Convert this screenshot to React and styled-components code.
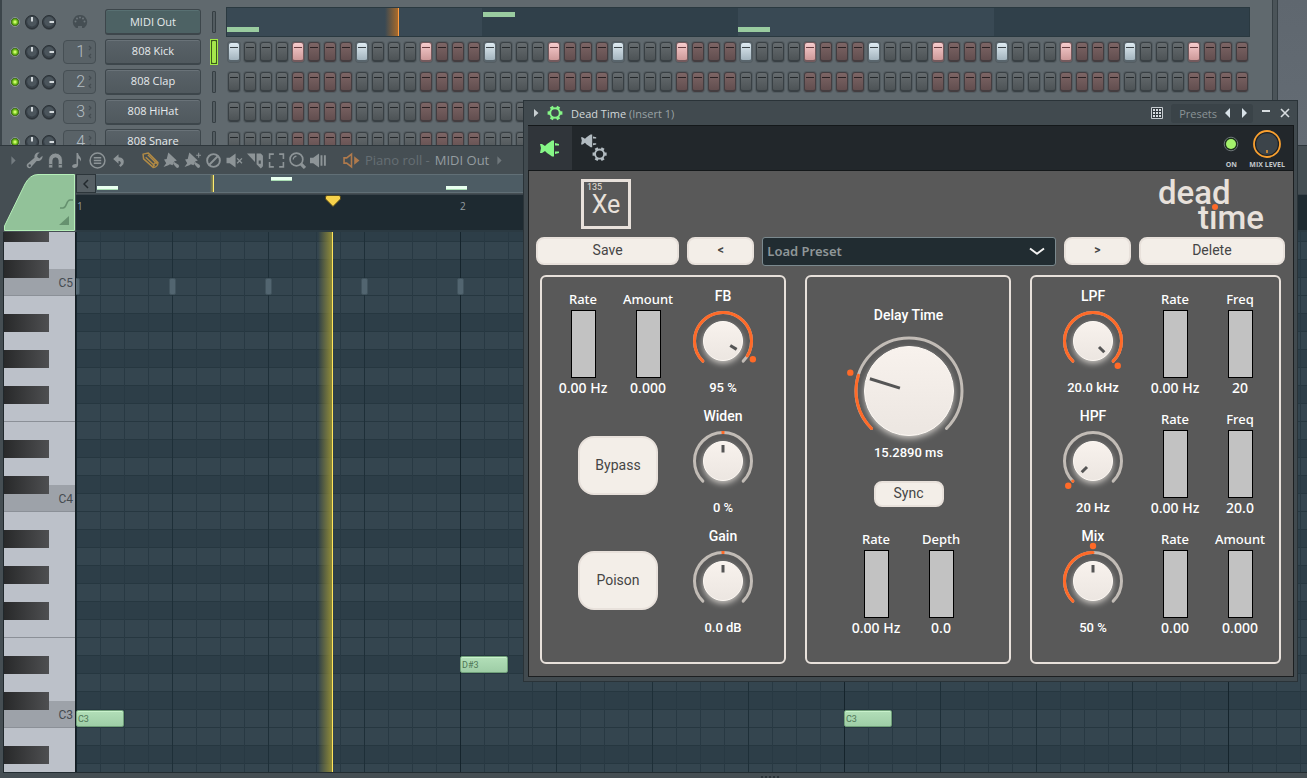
import React from "react";
import styled, { createGlobalStyle, css } from "styled-components";

const GlobalStyle = createGlobalStyle`
  *, *::before, *::after { box-sizing: border-box; }
  body { margin: 0; background: #454e53; }
  button, input, select { font: inherit; margin: 0; }
  button { padding: 0; border: 0; background: none; color: inherit; cursor: pointer; }
`;

const ui = '"Open Sans", "Noto Sans", sans-serif';
const grotesk = 'Roboto, "Liberation Sans", sans-serif';
const ORANGE = "#ff6a28";

const Desktop = styled.main`
  position: relative;
  display: flex;
  flex-direction: column;
  height: 100vh;
  overflow: hidden;
  font-family: ${ui};
`;

/* ---------- Channel rack ---------- */

const TopArea = styled.section`
  display: flex;
  height: 145px;
  flex: none;
  overflow: hidden;
`;

const Rack = styled.div`
  flex: 1;
  min-width: 0;
  padding: 7px 22px 0 8px;
  border-left: 2px solid #3c454a;
  background: #60696e;
`;

const Splitter = styled.div`
  width: 6px;
  background: #4b5459;
  border: solid #363f44;
  border-width: 0 1px;
`;

const SidePanel = styled.div`
  width: 29px;
  background: linear-gradient(#5f676f, #646c74);
`;

const Channel = styled.div`
  display: flex;
  align-items: center;
  height: 30px;
`;

const Led = styled.button`
  width: 10px;
  height: 10px;
  border-radius: 50%;
  border: 1px solid #8b9599;
  background: radial-gradient(circle, #d6ff72 10%, #74c41f 40%, #24450d 75%);
`;

const KnobPair = styled.div`
  display: flex;
  gap: 3px;
  margin: 0 7px 0 5px;
`;

const MixerSlot = styled.button`
  display: flex;
  align-items: center;
  justify-content: flex-end;
  gap: 3px;
  width: 33px;
  height: 24px;
  padding-right: 3px;
  border: 1px solid #464f54;
  border-radius: 4px;
  background: #596267;
  color: #b3bdc2;
  font: 300 16px/22px ${grotesk};
`;

const PortSlot = styled.div`
  display: flex;
  justify-content: center;
  width: 33px;
`;

const ChannelName = styled.button`
  width: 96px;
  height: 26px;
  margin: 0 9px;
  padding-bottom: ${(p) => (p.$midi ? 0 : 2)}px;
  border: 1px solid #3d464b;
  border-bottom-width: 2px;
  border-radius: 3px;
  background: ${(p) => (p.$midi ? "#4d6264" : "linear-gradient(#596268, #50595e)")};
  box-shadow: inset 0 1px 0 ${(p) => (p.$midi ? "#587072" : "#697278")};
  color: #e6eaec;
  font-size: 11px;
  font-weight: 500;
  line-height: 20px;
`;

const Selector = styled.button`
  width: 8px;
  height: 26px;
  margin-right: 8px;
  border: 1px solid transparent;
  padding: 1px;
  ${(p) => p.$on && css`border: 1px solid #a2ea44; background: #3b5a1c;`}
  &::before {
    content: "";
    display: block;
    height: 100%;
    border-radius: 1px;
    border: ${(p) => (p.$on ? "0" : "1px solid #363f44")};
    background: ${(p) => (p.$on ? "#a6e84c" : "#535c61")};
  }
`;

const Steps = styled.div`
  flex: 1;
  display: grid;
  grid-template-columns: repeat(64, 1fr);
  justify-items: center;
`;

const stepTone = {
  grey: ["#666c6f", "#4d5356", "#394044", "#24292c"],
  red: ["#7d6565", "#624e4f", "#443d40", "#2b2022"],
  greyOn: ["#dfebf2", "#a3b4be", "#59656c", "#3d464b"],
  redOn: ["#f7cccd", "#cd9999", "#74595c", "#6b3f42"],
};

const Step = styled.input`
  appearance: none;
  width: 12px;
  height: 20px;
  border: 1px solid ${(p) => stepTone[p.$tone][2]};
  border-bottom-width: 2px;
  border-radius: 3px;
  box-shadow: 0 0 0 1px #545d62;
  background:
    linear-gradient(${(p) => stepTone[p.$tone][3]}, ${(p) => stepTone[p.$tone][3]}) center 4px / 8px 1px no-repeat,
    linear-gradient(${(p) => stepTone[p.$tone][0]}, ${(p) => stepTone[p.$tone][1]});
`;

const ClipLane = styled.div`
  position: relative;
  flex: 1;
  height: 30px;
  border: 1px solid #2a3940;
  background: linear-gradient(90deg, #394954 25%, #30404a 25% 50%, #394954 50% 75%, #30404a 75%);
`;

const LaneNote = styled.i`
  position: absolute;
  width: 32px;
  height: 5px;
  background: #9acca0;
`;

const LanePlayhead = styled.i`
  position: absolute;
  top: 0;
  bottom: 0;
  width: 14px;
  border-right: 1px solid #ff9c40;
  background: linear-gradient(90deg, transparent, #a86a2a);
`;

/* ---------- Piano roll ---------- */

const PianoRoll = styled.section`
  flex: 1;
  min-height: 0;
  display: flex;
  flex-direction: column;
  padding: 0 0 0 3px;
  border-top: 1px solid #2e373c;
  background: #454e53;
`;

const Toolbar = styled.div`
  display: flex;
  align-items: center;
  height: 28px;
  flex: none;
  color: #8d9497;
`;

const ToolButton = styled.button`
  display: flex;
  align-items: center;
  justify-content: center;
  width: 21px;
  height: 24px;
  color: ${(p) => p.$color || "inherit"};
  svg { display: block; }
`;

const ToolGap = styled.span`
  width: ${(p) => p.$w}px;
`;

const RollTitle = styled.h2`
  display: flex;
  align-items: center;
  gap: 5px;
  margin: 0;
  font-size: 13px;
  font-weight: 400;
  color: #656e73;
  b { font-weight: 400; color: #949ca0; }
`;

const RollHead = styled.div`
  display: flex;
  height: 58px;
  flex: none;
`;

const KeyTab = styled.div`
  width: 73px;
  flex: none;
  svg { display: block; }
`;

const HeadLanes = styled.div`
  flex: 1;
  min-width: 0;
`;

const Overview = styled.div`
  display: flex;
  height: 21px;
  border-bottom: 1px solid #39434a;
`;

const ScrollButton = styled.button`
  display: flex;
  align-items: center;
  justify-content: center;
  width: 20px;
  height: 19px;
  border: 1px solid #2c353a;
  background: #565f64;
`;

const OverviewTrack = styled.div`
  position: relative;
  flex: 1;
  height: 19px;
  margin-right: 10px;
  border: solid #616f76;
  border-width: 1px 0;
  background: #4d5c64;
`;

const OverviewNote = styled.i`
  position: absolute;
  width: 21px;
  height: 4px;
  background: #e9fff0;
  border-bottom: 1px solid #a8dcb2;
`;

const OverviewPlayhead = styled.i`
  position: absolute;
  top: 0;
  bottom: 0;
  width: 4px;
  border-right: 1px solid #ffec72;
  background: linear-gradient(90deg, transparent, #8f8b45);
`;

const Timeline = styled.div`
  position: relative;
  height: 37px;
  border-bottom: 2px solid #2b3a42;
  background: #1e2a31;
  color: #949da2;
  font-size: 10px;
  line-height: 12px;
`;

const BarNumber = styled.span`
  position: absolute;
  top: 5px;
`;

const TimeMarker = styled.svg`
  position: absolute;
  top: 0;
  width: 16px;
  height: 13px;
`;

const Editor = styled.div`
  flex: 1;
  min-height: 0;
  display: flex;
  overflow: hidden;
  border-bottom: 1px solid #222c31;
`;

const Keyboard = styled.div`
  width: 72px;
  flex: none;
  overflow: hidden;
  border-left: 1px solid #20282c;
  background: #bcc1c9;
`;

const Key = styled.div`
  display: flex;
  justify-content: flex-end;
  align-items: flex-start;
  height: ${(p) => (p.$first ? 10 : 18)}px;
  padding-right: 2px;
  font: 400 12px/11px ${grotesk};
  color: #454b51;
  background: ${(p) =>
    p.$note === "C" ? "#9da2a9"
      : p.$note === "C#" ? "linear-gradient(transparent 50%, #9da2a9 50%)"
        : "transparent"};
  border-bottom: ${(p) => (p.$note === "C" || p.$note === "F" ? "1px solid #8b9097" : "0")};
  &::before {
    content: "";
    align-self: stretch;
    width: 45px;
    margin-right: auto;
    background: ${(p) => (p.$note.includes("#") ? "linear-gradient(90deg, #28292a, #4e4f51)" : "transparent")};
  }
`;

const NoteGrid = styled.div`
  position: relative;
  flex: 1;
  min-width: 0;
  overflow: hidden;
  border-left: 1px solid #141d22;
`;

const GridRow = styled.div`
  height: ${(p) => (p.$first ? 10 : 18)}px;
  border-bottom: 1px solid #263740;
  background: ${(p) => (p.$dark ? "#2d3e48" : "#34454f")};
`;

const GridLines = styled.div`
  position: absolute;
  inset: 0;
  background:
    repeating-linear-gradient(90deg, #15242c 0 1px, transparent 1px 384px),
    repeating-linear-gradient(90deg, #1e2f38 0 1px, transparent 1px 96px),
    repeating-linear-gradient(90deg, #283943 0 1px, transparent 1px 24px);
`;

const Note = styled.button`
  position: absolute;
  width: 48px;
  height: 17px;
  padding-left: 1px;
  border: 1px solid #6f9f79;
  border-radius: 2px;
  background: linear-gradient(#b2dfb8, #9ecda6);
  box-shadow: inset 0 1px 0 #c9f2cc;
  color: #4f7656;
  font: 400 9px/14px ${grotesk};
  text-align: left;
`;

const GhostNote = styled.i`
  position: absolute;
  width: 7px;
  height: 17px;
  border: 1px solid #41535d;
  border-radius: 2px;
  background: #526570;
`;

const Playhead = styled.i`
  position: absolute;
  top: 0;
  bottom: 0;
  width: 15px;
  border-right: 1px solid #ffe45c;
  background: linear-gradient(90deg, transparent, #8f8a38);
`;

const BottomGrip = styled.div`
  display: flex;
  justify-content: center;
  align-items: flex-end;
  height: 5px;
  flex: none;
  padding-left: 230px;
  &::after {
    content: "";
    width: 18px;
    height: 2px;
    background: repeating-linear-gradient(90deg, #2a3338 0 2px, transparent 2px 4px);
  }
`;

/* ---------- Plugin window ---------- */

const PluginWindow = styled.section`
  position: absolute;
  top: 100px;
  left: 523px;
  right: 9px;
  padding: 0 3px 4px 4px;
  border: 1px solid #2a3338;
  background: #414a4f;
`;

const TitleBar = styled.header`
  display: flex;
  align-items: center;
  height: 24px;
  padding: 0 0 0 2px;
  color: #cfd4d6;
`;

const TitleText = styled.h1`
  flex: 1;
  margin: 0 0 0 3px;
  font-size: 11px;
  font-weight: 500;
  color: #d3d8da;
  span { font-weight: 400; color: #9aa2a5; }
`;

const IconButton = styled.button`
  display: flex;
  align-items: center;
  justify-content: center;
  width: ${(p) => p.$w}px;
  height: 19px;
`;

const PresetGroup = styled.div`
  display: flex;
  align-items: center;
  height: 19px;
  margin: 0 3px 0 4px;
  padding: 0 2px 0 8px;
  border-radius: 3px;
  background: #3a4348;
  color: #8b9396;
  font-size: 11px;
  button { color: #d8e2e8; }
`;

const WrapperBar = styled.div`
  display: flex;
  height: 46px;
  border: solid #14181a;
  border-width: 1px 1px 1px 0;
  background: #22272b;
`;

const WrapperTab = styled.button`
  display: flex;
  align-items: center;
  justify-content: center;
  width: 44px;
  background: ${(p) => (p.$active ? "#30353a" : "transparent")};
`;

const WrapperControls = styled.div`
  display: flex;
  gap: 3px;
  margin-left: auto;
  padding-right: 8px;
`;

const WrapperControl = styled.label`
  display: flex;
  flex-direction: column;
  align-items: center;
  color: #c3c8cb;
  font-size: 7px;
  font-weight: 700;
  line-height: 8px;
  input { position: absolute; opacity: 0; width: 28px; height: 28px; }
  svg { display: block; margin: 4px 0 3px; }
`;

const Face = styled.div`
  padding: 8px 8px 12px 7px;
  border: solid #1c1f21;
  border-width: 0 1px 1px;
  background: #595959;
  color: #fff;
  font-family: ${grotesk};
`;

const Brand = styled.div`
  display: flex;
  justify-content: space-between;
  height: 58px;
  padding: 0 18px 0 45px;
`;

const Element = styled.div`
  width: 50px;
  height: 50px;
  border: 3px solid #e8e1db;
  color: #e8e1db;
  text-align: center;
  font-size: 25px;
  line-height: 24px;
  small {
    display: block;
    padding-left: 3px;
    text-align: left;
    font-size: 9px;
    line-height: 11px;
  }
`;

const Wordmark = styled.svg`
  display: block;
  width: 110px;
  height: 57px;
  overflow: visible;
  font: 500 33px ${grotesk};
  fill: #e8e1db;
`;

const PresetRow = styled.div`
  display: grid;
  grid-template-columns: 143fr 67fr 293fr 67fr 146fr;
  gap: 8px;
`;

const CreamButton = styled.button`
  height: ${(p) => p.$h || 28}px;
  width: ${(p) => (p.$w ? p.$w + "px" : "auto")};
  padding-bottom: 2px;
  border: 2px solid #e8e1db;
  border-radius: ${(p) => p.$r || 8}px;
  background: #f3eee8;
  color: #454545;
  font-size: ${(p) => (p.$small ? 12 : 14)}px;
  font-weight: ${(p) => (p.$small ? 700 : 400)};
  line-height: 20px;
`;

const SelectWrap = styled.div`
  position: relative;
  svg { position: absolute; right: 11px; top: 10px; pointer-events: none; }
`;

const PresetSelect = styled.select`
  appearance: none;
  display: block;
  width: 100%;
  height: 29px;
  padding: 0 4px 2px;
  border: 1px solid #7b898e;
  border-radius: 3px;
  background: #212c31;
  color: #8f9698;
  font: 600 13px/20px "Noto Sans", ${ui};
`;

const Panels = styled.div`
  display: grid;
  grid-template-columns: 246fr 206fr 251fr;
  gap: 19px;
  padding: 9px 4px 0;
`;

const Panel = styled.section`
  min-height: 389px;
  border: 2px solid #e8e1db;
  border-radius: 6px;
`;

const FeedbackPanel = styled(Panel)`
  display: grid;
  grid-template-columns: 65px 65px 85px;
  grid-template-rows: repeat(3, 120px);
  justify-content: center;
  padding: 7px 10px 0 0;
`;

const FilterPanel = styled(Panel)`
  display: grid;
  grid-template-columns: 99px 65px 65px;
  grid-template-rows: repeat(3, 120px);
  justify-content: center;
  padding: 7px 0 0 5px;
`;

const DelayPanel = styled(Panel)`
  display: flex;
  flex-direction: column;
  align-items: center;
  padding: 26px 0 0 1px;
`;

const PadStack = styled.div`
  grid-column: 1 / 3;
  grid-row: 2 / 4;
  display: flex;
  flex-direction: column;
  align-items: center;
  gap: 56px;
  padding: 32px 0 0 5px;
`;

const KnobCell = styled.label`
  position: relative;
  display: flex;
  flex-direction: column;
  align-items: center;
  font-size: 14px;
  font-weight: 500;
  line-height: 24px;
  white-space: nowrap;
  svg { display: block; overflow: visible; margin-bottom: ${(p) => (p.$big ? 0 : 2)}px; }
  input { position: absolute; top: 30px; width: 60px; height: 60px; margin: 0; opacity: 0; }
  output { font-size: 13px; }
`;

const SyncWrap = styled.div`
  margin: 16px 0 21px;
`;

const SliderPair = styled.div`
  display: grid;
  grid-template-columns: 65px 65px;
`;

const SliderCell = styled.label`
  display: flex;
  flex-direction: column;
  align-items: center;
  padding-top: ${(p) => (p.$flush ? 0 : 4)}px;
  font: 500 13px/22px "Noto Sans", ${ui};
  white-space: nowrap;
  output { font-size: 14px; line-height: 20px; }
`;

const SliderInput = styled.input`
  appearance: none;
  writing-mode: vertical-lr;
  direction: rtl;
  width: 25px;
  height: 68px;
  border: 1px solid #000;
  background: #c2c2c2;
  &::-webkit-slider-thumb { appearance: none; width: 25px; height: 1px; background: transparent; }
`;

/* ---------- Drawings ---------- */

function MiniKnob({ right }) {
  return (
    <svg width="14" height="15" viewBox="0 0 14 15">
      <circle cx="7" cy="8.2" r="6.6" fill="#394146" />
      <circle cx="7" cy="7" r="6.5" fill="#3a434a" stroke="#2a3136" />
      <circle cx="7" cy="6.6" r="4.8" fill="#4b555c" />
      {right ? <rect x="7.5" y="6" width="4.5" height="2" fill="#d3d9dc" /> : <rect x="6" y="2" width="2" height="4.5" fill="#d3d9dc" />}
    </svg>
  );
}

function MidiPort() {
  return (
    <svg width="16" height="16" viewBox="0 0 16 16">
      <path d="M8 1a7 7 0 0 1 5 12l-1 1h-2v-2H6v2H4l-1-1A7 7 0 0 1 8 1z" fill="#454e53" />
      {[[3.5, 7.5], [5, 4.6], [8, 3.4], [11, 4.6], [12.5, 7.5]].map(([x, y]) => (
        <circle key={x} cx={x} cy={y} r="1" fill="#6b7479" />
      ))}
    </svg>
  );
}

function Spin() {
  return (
    <svg width="4" height="16" viewBox="0 0 4 16" fill="none" stroke="#444c51" strokeWidth="1.2">
      <path d="M1 2l2 2-2 2M3 10l-2 2 2 2" />
    </svg>
  );
}

function polar(c, r, deg) {
  const a = (deg * Math.PI) / 180;
  return [c[0] + r * Math.sin(a), c[1] - r * Math.cos(a)];
}

function arc(c, r, from, to) {
  const [x1, y1] = polar(c, r, from);
  const [x2, y2] = polar(c, r, to);
  return `M${x1} ${y1}A${r} ${r} 0 ${to - from > 180 ? 1 : 0} 1 ${x2} ${y2}`;
}

function Dial({ value, big, bipolar }) {
  const c = big ? [64, 64] : [33, 33];
  const ring = big ? 53 : 28.5;
  const body = big ? 44.5 : 19.5;
  const angle = value * 270 - 135;
  const tick = big ? [9.5, 41] : [8.5, 16];
  const t1 = polar(c, tick[0], angle);
  const t2 = polar(c, tick[1], angle);
  const dot = polar(c, big ? 61.5 : 35, angle);
  const id = big ? "dial-big" : "dial-small";
  return (
    <svg width={big ? 128 : 66} height={big ? 114 : 66} viewBox={big ? "0 0 128 114" : "0 0 66 66"} aria-hidden="true">
      <defs>
        <linearGradient id={id} x2="0" y2="1">
          <stop offset="0" stopColor="#f8f2ed" />
          <stop offset="1" stopColor="#ece6e1" />
        </linearGradient>
        <filter id={id + "-glow"} x="-40%" y="-40%" width="180%" height="180%">
          <feGaussianBlur stdDeviation="3" />
        </filter>
      </defs>
      <circle cx={c[0]} cy={c[1] + 3} r={body} fill="#f3eee8" opacity="0.75" filter={`url(#${id}-glow)`} />
      <g fill="none" strokeWidth="3" strokeLinecap="round">
        <path d={arc(c, ring, -135, 135)} stroke="#c2bcb6" />
        {bipolar
          ? <path d={arc(c, ring, -3, 3)} stroke={ORANGE} strokeLinecap="butt" />
          : <path d={arc(c, ring, -135, Math.max(angle, -134.5))} stroke={ORANGE} />}
      </g>
      <circle cx={c[0]} cy={c[1]} r={body} fill={`url(#${id})`} stroke="#fffaf5" />
      <line x1={t1[0]} y1={t1[1]} x2={t2[0]} y2={t2[1]} stroke="#555" strokeWidth="3" />
      {!bipolar && <circle cx={dot[0]} cy={dot[1]} r="3.2" fill={ORANGE} />}
    </svg>
  );
}

function Knob({ label, text, value, big, bipolar }) {
  return (
    <KnobCell $big={big}>
      <span>{label}</span>
      <Dial value={value} big={big} bipolar={bipolar} />
      <input type="range" min="0" max="1" step="0.001" defaultValue={value} />
      <output>{text}</output>
    </KnobCell>
  );
}

function Slider({ label, text, flush }) {
  return (
    <SliderCell $flush={flush}>
      <span>{label}</span>
      <SliderInput type="range" min="0" max="1" step="0.001" defaultValue="0" />
      <output>{text}</output>
    </SliderCell>
  );
}

function GearShape({ color }) {
  return (
    <g fill="none" stroke={color}>
      <circle cx="8" cy="8" r="4.8" strokeWidth="2" />
      {[30, 90, 150, 210, 270, 330].map((a) => (
        <path key={a} d="M8 3V.6" strokeWidth="3.4" transform={`rotate(${a} 8 8)`} />
      ))}
    </g>
  );
}

const plugPath = "M0 4h2l3 2 2-2 3-2 2-1.500h2v16h-2L10 15l-3-2-2-2-3 2H0l1-5zM15 3l4 1v1.500h-4zM15 11.500h4V13l-4 1z";

function Plug() {
  return (
    <svg width="20" height="17" viewBox="0 0 20 17"><path d={plugPath} fill="#86f787" /></svg>
  );
}

function PlugGear() {
  return (
    <svg width="27" height="28" viewBox="0 0 27 28">
      <path d={plugPath} fill="#b3bcc2" transform="scale(.8)" />
      <g transform="translate(11 12.500) scale(.95)"><GearShape color="#b3bcc2" /></g>
    </svg>
  );
}

const brush = (
  <>
    <path d="M5 .5L13 8l-2.500 1L9 12.500 6.500 11.500 5 12.500.5 14 3 10.500 1 7 3.500 6.500z" />
    <path d="M10.500 9.500l4 2.500a1.600 1.600 0 1 1-2 2.500L9.500 11z" />
  </>
);

const icons = {
  play: <path d="M6 4l4 4-4 4z" />,
  wrench: <path d="M15.500 3.500l-3 2.500-2-1.500L11 2l2-1.500C10 0 7.500 2 8 5.500L2.500 10C.5 11 0 13 1.500 14.500S5 15 5.500 13.500L10 8.500c3.500.5 6-2 5.500-5zM3.500 14a1.200 1.200 0 1 1 0-2.400 1.200 1.200 0 0 1 0 2.400z" />,
  magnet: <path d="M1.500 15V7.500a6.500 6.500 0 0 1 13 0V15h-4V8a2.500 2.500 0 0 0-5 0v7zM2 11.800h3M11 11.800h3" stroke="#454e53" strokeWidth=".8" />,
  note: <path d="M8 1h1.500c0 3 4 4 2.500 8-.5-2-1.500-2.500-2.500-2.800V12c0 2-2 3-3.500 3S3.500 14 4 13s2-2 4-1.500z" />,
  menu: <g fill="none" stroke="currentColor" strokeWidth="1.400"><circle cx="8" cy="8" r="7" /><path d="M4.500 5.500h7M4.500 8h7M4.500 10.500h7" /></g>,
  undo: <path d="M3 6.500L8 2v3c4 0 6 3 4.500 6.500L10 14l-1.500-1.500C11 11 10.500 8.500 8 8.500V11z" />,
  pencil: <g fill="none" stroke="currentColor" strokeWidth="1.400" strokeLinejoin="round"><path d="M1 2l5-1 9 9c0 2.500-2 4.500-4.500 4.500L1.500 6.500z" /><path d="M3.500 5L12 13M5.500 2.500L14 11M11 14a3 3 0 0 1 3.500-4" /></g>,
  brush,
  brushPlus: <>{brush}<path d="M11.500 3h4.500M13.800.8v4.500" stroke="currentColor" /></>,
  ban: <g fill="none" stroke="currentColor" strokeWidth="1.800"><circle cx="8" cy="8" r="6" /><path d="M4 12l8-8" /></g>,
  mute: <><path d="M.5 5.500h3L9 1.500v13l-5.500-4h-3z" /><path d="M10.500 6l4.500 4.500M15 6l-4.500 4.500" stroke="currentColor" strokeWidth="1.300" /></>,
  slice: <><path d="M0 1.500h7.500v8z" /><path fillRule="evenodd" d="M9 1.500h4l2 2v10l-2 2-4-4zM11 8v3h2V8z" /></>,
  select: <path d="M1.500 6.500V2H5.500M10.500 2h4v4.500M14.500 9.500V14h-4M5.500 14h-4V9.500" fill="none" stroke="currentColor" strokeWidth="1.500" />,
  zoom: <g fill="none" stroke="currentColor"><circle cx="7" cy="7" r="6" strokeWidth="1.600" /><path d="M11 11l4 4" strokeWidth="3" /><path d="M4 7a3 3 0 0 1 3-3" strokeWidth="1.200" /></g>,
  playback: <><path d="M0 5.500h3L8.500 1.500v13L3 10.500H0z" /><path d="M10.800 3v10M14 3v10" stroke="currentColor" strokeWidth="1.800" /></>,
  speaker: <><path d="M1 5.500h2.500L8 2v12l-4.500-3.500H1z" fill="none" stroke="currentColor" strokeWidth="1.500" /><path d="M10.500 4l5 4-5 4z" /></>,
};

function Tool({ name, color }) {
  return (
    <ToolButton type="button" aria-label={name} $color={color}>
      <svg width="17" height="17" viewBox="0 0 16 16" fill="currentColor">{icons[name]}</svg>
    </ToolButton>
  );
}

/* ---------- Data ---------- */

const channels = ["808 Kick", "808 Clap", "808 HiHat", "808 Snare"];
const names = ["C", "C#", "D", "D#", "E", "F", "F#", "G", "G#", "A", "A#", "B"];
const rows = Array.from({ length: 64 }, (_, i) => {
  const semitone = 63 - i;
  return { note: names[semitone % 12], octave: Math.floor(semitone / 12) };
});
const rowTop = (i) => (i === 0 ? 0 : 10 + (i - 1) * 18);
const notes = [
  { name: "C3", beat: 0, row: 27 },
  { name: "D#3", beat: 4, row: 24 },
  { name: "C3", beat: 8, row: 27 },
];

function StepRow({ channel, active }) {
  return (
    <Steps>
      {Array.from({ length: 64 }, (_, i) => {
        const red = Math.floor(i / 4) % 2 === 1;
        const on = active && i % 4 === 0;
        return (
          <Step
            key={i}
            type="checkbox"
            aria-label={`${channel} step ${i + 1}`}
            defaultChecked={on}
            $tone={(red ? "red" : "grey") + (on ? "On" : "")}
          />
        );
      })}
    </Steps>
  );
}

function ChannelRack() {
  return (
    <TopArea>
      <Rack>
        <Channel>
          <Led type="button" aria-label="MIDI Out on" />
          <KnobPair><MiniKnob /><MiniKnob right /></KnobPair>
          <PortSlot><MidiPort /></PortSlot>
          <ChannelName type="button" $midi>MIDI Out</ChannelName>
          <Selector type="button" aria-label="Select MIDI Out" />
          <ClipLane>
            <LaneNote style={{ left: 0, top: 19 }} />
            <LaneNote style={{ left: "25%", top: 4 }} />
            <LaneNote style={{ left: "50%", top: 19 }} />
            <LanePlayhead style={{ left: 158 }} />
          </ClipLane>
        </Channel>
        {channels.map((name, i) => (
          <Channel key={name}>
            <Led type="button" aria-label={`${name} on`} />
            <KnobPair><MiniKnob /><MiniKnob right /></KnobPair>
            <MixerSlot type="button">{i + 1}<Spin /></MixerSlot>
            <ChannelName type="button">{name}</ChannelName>
            <Selector type="button" aria-label={`Select ${name}`} $on={i === 0} />
            <StepRow channel={name} active={i === 0} />
          </Channel>
        ))}
      </Rack>
      <Splitter />
      <SidePanel />
    </TopArea>
  );
}

function Roll() {
  return (
    <PianoRoll>
      <Toolbar>
        <Tool name="play" color="#747c80" />
        <Tool name="wrench" />
        <Tool name="magnet" />
        <Tool name="note" />
        <Tool name="menu" />
        <Tool name="undo" />
        <ToolGap $w={11} />
        <Tool name="pencil" color="#b18a45" />
        <Tool name="brush" />
        <Tool name="brushPlus" />
        <Tool name="ban" />
        <Tool name="mute" />
        <Tool name="slice" />
        <Tool name="select" />
        <Tool name="zoom" />
        <Tool name="playback" />
        <ToolGap $w={12} />
        <Tool name="speaker" color="#b07a4c" />
        <ToolGap $w={3} />
        <RollTitle>Piano roll - <b>MIDI Out</b></RollTitle>
        <Tool name="play" color="#6f777b" />
      </Toolbar>
      <RollHead>
        <KeyTab>
          <svg width="73" height="58" viewBox="0 0 73 58">
            <path d="M1.500 56.500V52L22 10Q27 .500 35 .500H71.500V56.500z" fill="#92c299" stroke="#b6efb9" />
            <path d="M58 34h3c4 0 3-8 7-8h3" transform="translate(-1 0)" fill="none" stroke="#66916f" strokeWidth="1.600" />
            <path d="M56 51L66 42v9z" fill="#66916f" />
          </svg>
        </KeyTab>
        <HeadLanes>
          <Overview>
            <ScrollButton type="button" aria-label="Scroll left">
              <svg width="6" height="10" viewBox="0 0 6 10" fill="none" stroke="#22292d" strokeWidth="1.500"><path d="M5 1L1 5l4 4" /></svg>
            </ScrollButton>
            <OverviewTrack>
              <OverviewNote style={{ left: 1, top: 11 }} />
              <OverviewNote style={{ left: 175, top: 2 }} />
              <OverviewNote style={{ left: 350, top: 11 }} />
              <OverviewPlayhead style={{ left: 114 }} />
            </OverviewTrack>
          </Overview>
          <Timeline>
            <BarNumber style={{ left: 1 }}>1</BarNumber>
            <BarNumber style={{ left: 384 }}>2</BarNumber>
            <TimeMarker viewBox="0 0 16 13" style={{ left: 249 }}>
              <path d="M.5 1.500L2 .500h12l1.500 1V4L8 11.500.500 4z" fill="#f7d24b" stroke="#5a4c18" />
            </TimeMarker>
          </Timeline>
        </HeadLanes>
      </RollHead>
      <Editor>
        <Keyboard>
          {rows.map((r, i) => (
            <Key key={i} $note={r.note} $first={i === 0}>{r.note === "C" ? `C${r.octave}` : null}</Key>
          ))}
        </Keyboard>
        <NoteGrid>
          {rows.map((r, i) => (
            <GridRow key={i} $first={i === 0} $dark={r.note.includes("#")} />
          ))}
          <GridLines />
          {[0, 1, 2, 3, 4].map((b) => (
            <GhostNote key={b} style={{ left: b * 96 - 3, top: rowTop(3) }} />
          ))}
          {notes.map((n) => (
            <Note key={n.beat} type="button" style={{ left: n.beat * 96, top: rowTop(n.row) }}>{n.name}</Note>
          ))}
          <Playhead style={{ left: 242 }} />
        </NoteGrid>
      </Editor>
      <BottomGrip />
    </PianoRoll>
  );
}

function DeadTime() {
  return (
    <PluginWindow>
      <TitleBar>
        <IconButton type="button" aria-label="Plugin menu" $w={12}>
          <svg width="5" height="8" viewBox="0 0 5 8"><path d="M0 0l4.500 4L0 8z" fill="#c9d0d3" /></svg>
        </IconButton>
        <IconButton type="button" aria-label="Settings" $w={26}>
          <svg width="16" height="16" viewBox="0 0 16 16"><GearShape color="#86f787" /></svg>
        </IconButton>
        <TitleText>Dead Time <span>(Insert 1)</span></TitleText>
        <IconButton type="button" aria-label="Preset browser" $w={20}>
          <svg width="12" height="12" viewBox="0 0 12 12">
            <path d="M.5.500h11v11H.5z" fill="#323a3f" stroke="#c6ccd0" />
            <path d="M2 3h8M2 6h8M2 9h8" stroke="#d6dce0" strokeWidth="2" strokeDasharray="2 1" />
          </svg>
        </IconButton>
        <PresetGroup>
          Presets
          <IconButton type="button" aria-label="Previous preset" $w={20}>
            <svg width="5" height="10" viewBox="0 0 5 10"><path d="M5 0v10L0 5z" fill="currentColor" /></svg>
          </IconButton>
          <IconButton type="button" aria-label="Next preset" $w={14}>
            <svg width="5" height="10" viewBox="0 0 5 10"><path d="M0 0v10l5-5z" fill="currentColor" /></svg>
          </IconButton>
        </PresetGroup>
        <IconButton type="button" aria-label="Minimize" $w={20}>
          <svg width="8" height="8" viewBox="0 0 8 8"><path d="M0 2h8" stroke="#d8dde0" strokeWidth="2" /></svg>
        </IconButton>
        <IconButton type="button" aria-label="Close" $w={18}>
          <svg width="10" height="10" viewBox="0 0 10 10"><path d="M1 1l8 8M9 1L1 9" stroke="#d8dde0" strokeWidth="1.600" /></svg>
        </IconButton>
      </TitleBar>
      <WrapperBar>
        <WrapperTab type="button" aria-label="Plugin" $active><Plug /></WrapperTab>
        <WrapperTab type="button" aria-label="Wrapper settings"><PlugGear /></WrapperTab>
        <WrapperControls>
          <WrapperControl>
            <input type="checkbox" defaultChecked />
            <svg width="30" height="28" viewBox="0 0 30 28">
              <circle cx="15" cy="14" r="6.800" fill="#1c2f1c" stroke="#6d7478" />
              <circle cx="15" cy="14" r="5" fill="#a4f26c" />
            </svg>
            ON
          </WrapperControl>
          <WrapperControl>
            <input type="range" />
            <svg width="28" height="28" viewBox="0 0 28 28">
              <circle cx="14" cy="14" r="13" fill="#1d2124" stroke="#f9a030" strokeWidth="1.800" />
              <circle cx="14" cy="14" r="10.800" fill="#3c444a" />
              <path d="M14 20v3" stroke="#f9a030" strokeWidth="1.400" />
            </svg>
            MIX LEVEL
          </WrapperControl>
        </WrapperControls>
      </WrapperBar>
      <Face>
        <Brand>
          <Element><small>135</small>Xe</Element>
          <Wordmark viewBox="0 0 110 57">
            <text x="1" y="25">dead</text>
            <text x="41" y="50">tıme</text>
            <circle cx="58" cy="28" r="3" fill={ORANGE} />
          </Wordmark>
        </Brand>
        <PresetRow>
          <CreamButton type="button">Save</CreamButton>
          <CreamButton type="button" $small>&lt;</CreamButton>
          <SelectWrap>
            <PresetSelect aria-label="Preset"><option>Load Preset</option></PresetSelect>
            <svg width="16" height="9" viewBox="0 0 16 9" fill="none" stroke="#f3f3f3" strokeWidth="2"><path d="M1 1.500L8 6.800l7-5.300" strokeLinejoin="round" /></svg>
          </SelectWrap>
          <CreamButton type="button" $small>&gt;</CreamButton>
          <CreamButton type="button">Delete</CreamButton>
        </PresetRow>
        <Panels>
          <FeedbackPanel>
            <Slider label="Rate" text="0.00 Hz" />
            <Slider label="Amount" text="0.000" />
            <Knob label="FB" text="95 %" value={0.95} />
            <PadStack>
              <CreamButton type="button" $w={80} $h={59} $r={16}>Bypass</CreamButton>
              <CreamButton type="button" $w={80} $h={59} $r={16}>Poison</CreamButton>
            </PadStack>
            <Knob label="Widen" text="0 %" value={0.5} bipolar />
            <Knob label="Gain" text="0.0 dB" value={0.5} bipolar />
          </FeedbackPanel>
          <DelayPanel>
            <Knob label="Delay Time" text="15.2890 ms" value={0.231} big />
            <SyncWrap><CreamButton type="button" $w={70} $h={26}>Sync</CreamButton></SyncWrap>
            <SliderPair>
              <Slider label="Rate" text="0.00 Hz" flush />
              <Slider label="Depth" text="0.0" flush />
            </SliderPair>
          </DelayPanel>
          <FilterPanel>
            <Knob label="LPF" text="20.0 kHz" value={1} />
            <Slider label="Rate" text="0.00 Hz" />
            <Slider label="Freq" text="20" />
            <Knob label="HPF" text="20 Hz" value={0} />
            <Slider label="Rate" text="0.00 Hz" />
            <Slider label="Freq" text="20.0" />
            <Knob label="Mix" text="50 %" value={0.5} />
            <Slider label="Rate" text="0.00" />
            <Slider label="Amount" text="0.000" />
          </FilterPanel>
        </Panels>
      </Face>
    </PluginWindow>
  );
}

export default function App() {
  return (
    <Desktop>
      <GlobalStyle />
      <ChannelRack />
      <Roll />
      <DeadTime />
    </Desktop>
  );
}
